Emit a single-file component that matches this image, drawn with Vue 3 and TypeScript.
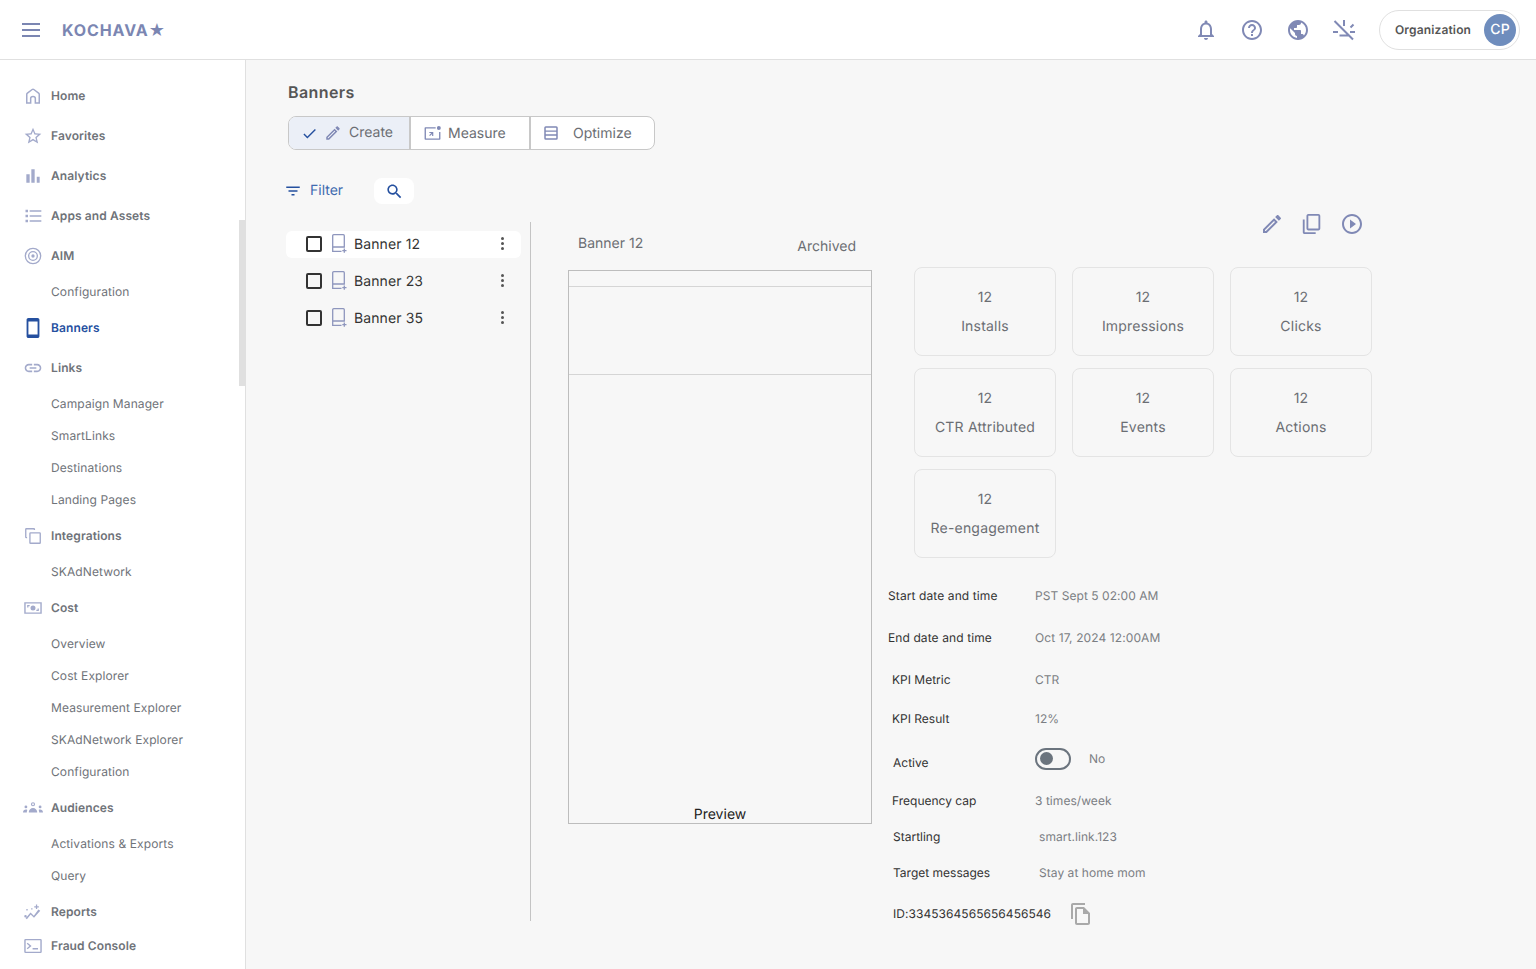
<script setup lang="ts">
interface NavItem { label: string; icon?: string; active?: boolean; last?: boolean }

const icons: Record<string, string> = {
  home: 'M4.500 20.500V10.200C4.500 9.600 4.800 9 5.300 8.600L11 4.200C11.600 3.800 12.400 3.800 13 4.200L18.700 8.600C19.200 9 19.500 9.600 19.500 10.200V20.500H14.800V15C14.800 13.600 13.600 12.600 12 12.600S9.200 13.600 9.200 15V20.500Z',
  star: 'M22 9.240l-7.190-.62L12 2 9.190 8.630 2 9.240l5.460 4.730L5.820 21 12 17.270 18.180 21l-1.630-7.030L22 9.240zM12 15.400l-3.760 2.270 1-4.280-3.320-2.880 4.380-.38L12 6.100l1.710 4.040 4.380.38-3.320 2.880 1 4.280L12 15.400z',
  bars: 'M4 10h4v10H4zM10 4h4v16h-4zM16.500 13H20v7h-3.500z',
  list: 'M3 4.500h3v3H3zM3 10.500h3v3H3zM3 16.500h3v3H3zM8 5h14v2H8zM8 11h14v2H8zM8 17h14v2H8z',
  aim: 'M12 2a10 10 0 1 0 0 20 10 10 0 0 0 0-20zm0 18.400a8.400 8.400 0 1 1 0-16.800 8.400 8.400 0 0 1 0 16.800zM12 6a6 6 0 1 0 0 12 6 6 0 0 0 0-12zm0 10.400a4.400 4.400 0 1 1 0-8.800 4.400 4.400 0 0 1 0 8.800zM12 10a2 2 0 1 0 0 4 2 2 0 0 0 0-4z',
  phone: 'M17 1.010L7 1c-1.100 0-2 .9-2 2v18c0 1.100.9 2 2 2h10c1.100 0 2-.9 2-2V3c0-1.100-.9-1.990-2-1.990zM17 19H7V5h10v14z',
  link: 'M3.900 12c0-1.710 1.390-3.100 3.100-3.100h4V7H7c-2.760 0-5 2.240-5 5s2.240 5 5 5h4v-1.900H7c-1.710 0-3.100-1.390-3.100-3.100zM8 13h8v-2H8v2zm9-6h-4v1.900h4c1.710 0 3.100 1.390 3.100 3.100s-1.390 3.100-3.100 3.100h-4V17h4c2.760 0 5-2.240 5-5s-2.240-5-5-5z',
  integrations: 'M4 2.500h9a1.500 1.500 0 0 1 1.500 1.500v.8h-1.600V4.100H4.100v9h.8v1.600H4A1.500 1.500 0 0 1 2.500 13.200V4A1.500 1.500 0 0 1 4 2.500zM9 7.500h11A1.500 1.500 0 0 1 21.500 9v11a1.500 1.500 0 0 1-1.500 1.500H9A1.500 1.500 0 0 1 7.500 20V9A1.500 1.500 0 0 1 9 7.500zm.1 1.600v10.800h10.800V9.100z',
  cost: 'M1.500 5h21v14h-21zM3.200 6.700v10.600h17.600V6.700zM12 9a3 3 0 1 1 0 6 3 3 0 0 1 0-6zM5 8.500h3V10H6.500v1.500H5zM19 15.500h-3V14h1.500v-1.500H19z',
  audiences: 'M12 5a2.500 2.500 0 1 1 0 5 2.500 2.500 0 0 1 0-5zm0 1.400a1.100 1.100 0 1 0 0 2.200 1.100 1.100 0 0 0 0-2.200zM7 16.500c0-2.200 2.400-4.500 5-4.500s5 2.300 5 4.500v1H7zM3.500 9a1.700 1.700 0 1 1 0 3.400 1.700 1.700 0 0 1 0-3.400zM20.500 9a1.700 1.700 0 1 1 0 3.400 1.700 1.700 0 0 1 0-3.400zM0 17.500c0-2 1.500-3.600 3.500-3.600.7 0 1.200.2 1.700.5-.4.800-.6 1.700-.6 3.100zM24 17.500c0-2-1.500-3.600-3.500-3.600-.7 0-1.200.2-1.700.5.4.800.6 1.700.6 3.100z',
  reports: 'M3.200 19.500 9 12.500l4 4 5.500-7.500 2.200 1.500L13.200 19l-4-4-4.500 5.800zM3 15.500a1.500 1.500 0 1 1 0 3 1.500 1.500 0 0 1 0-3zM4 8.500h1.600v1.600H4zM9.800 7.500h1.600v1.600H9.800zM15.500 3h1.500v2h2v1.500h-2v2h-1.500v-2h-2V5h2z',
  console: 'M3 3.500h18A1.500 1.500 0 0 1 22.500 5v14a1.500 1.500 0 0 1-1.500 1.500H3A1.500 1.500 0 0 1 1.500 19V5A1.500 1.500 0 0 1 3 3.500zm.2 1.700v13.600h17.600V5.200zM5.500 8.200l4.800 3.800-4.800 3.800-1-1.200 3.200-2.600-3.200-2.600zM11.500 14.500h6.500v1.700h-6.500z',
  bell: 'M12 22c1.100 0 2-.9 2-2h-4c0 1.100.9 2 2 2zm6-6v-5c0-3.070-1.630-5.640-4.500-6.320V4c0-.83-.67-1.500-1.500-1.500s-1.500.67-1.500 1.500v.68C7.640 5.360 6 7.920 6 11v5l-2 2v1h16v-1l-2-2zm-2 1H8v-6c0-2.480 1.510-4.500 4-4.500s4 2.020 4 4.500v6z',
  help: 'M11 18h2v-2h-2v2zm1-16C6.480 2 2 6.480 2 12s4.480 10 10 10 10-4.480 10-10S17.520 2 12 2zm0 18c-4.410 0-8-3.590-8-8s3.590-8 8-8 8 3.590 8 8-3.590 8-8 8zm0-14c-2.210 0-4 1.790-4 4h2c0-1.100.9-2 2-2s2 .9 2 2c0 2-3 1.750-3 5h2c0-2.250 3-2.500 3-5 0-2.210-1.790-4-4-4z',
  globe: 'M12 2C6.480 2 2 6.480 2 12s4.480 10 10 10 10-4.480 10-10S17.520 2 12 2zm-1 17.930c-3.950-.49-7-3.850-7-7.930 0-.62.08-1.210.21-1.790L9 15v1c0 1.100.9 2 2 2v1.930zm6.900-2.540c-.26-.81-1-1.390-1.900-1.390h-1v-3c0-.55-.45-1-1-1H8v-2h2c.55 0 1-.45 1-1V7h2c1.100 0 2-.9 2-2v-.41c2.930 1.190 5 4.060 5 7.410 0 2.080-.8 3.970-2.100 5.390z',
  lightOff: 'M2.500 3L21 21.500M12 2V8M18.500 9.500L21.500 6.500M1 14H6M18 14H23M7.500 17.500H17',
  edit: 'M3 17.250V21h3.750L17.810 9.940l-3.750-3.750L3 17.250zM5.920 19H5v-.92l9.060-9.060.92.92L5.920 19zM20.710 5.630l-2.340-2.340c-.2-.2-.45-.29-.71-.29s-.51.1-.7.29l-1.830 1.830 3.750 3.750 1.830-1.830c.39-.39.39-1.020 0-1.410z',
  copy: 'M16 1H4c-1.100 0-2 .9-2 2v14h2V3h12V1zm3 4H8c-1.100 0-2 .9-2 2v14c0 1.100.9 2 2 2h11c1.100 0 2-.9 2-2V7c0-1.100-.9-2-2-2zm0 16H8V7h11v14z',
  play: 'M10 16.500l6-4.500-6-4.500v9zM12 2C6.480 2 2 6.480 2 12s4.480 10 10 10 10-4.480 10-10S17.520 2 12 2zm0 18c-4.410 0-8-3.590-8-8s3.590-8 8-8 8 3.590 8 8-3.590 8-8 8z',
  file: 'M16 1H4c-1.100 0-2 .9-2 2v14h2V3h12V1zm-1 4H8c-1.100 0-1.990.9-1.990 2L6 21c0 1.100.89 2 1.990 2H19c1.100 0 2-.9 2-2V11l-6-6zM8 21V7h6v5h5v9H8z',
  search: 'M15.500 14h-.79l-.28-.27C15.410 12.590 16 11.110 16 9.500 16 5.910 13.090 3 9.500 3S3 5.910 3 9.500 5.910 16 9.500 16c1.610 0 3.090-.59 4.230-1.570l.27.28v.79l5 4.990L20.490 19l-4.990-5zm-6 0C7.010 14 5 11.990 5 9.500S7.010 5 9.500 5 14 7.010 14 9.500 11.990 14 9.500 14z',
  filter: 'M10 18h4v-2h-4v2zM3 6v2h18V6H3zm3 7h12v-2H6v2z',
  check: 'M9 16.170L4.830 12l-1.420 1.410L9 19 21 7l-1.410-1.410z',
  measure: 'M3 4h13v1.700H3.700v12.600h16.600V10H22v9a1 1 0 0 1-1 1H3a1 1 0 0 1-1-1V5a1 1 0 0 1 1-1zM20 2.500a2.500 2.500 0 1 1 0 5 2.500 2.500 0 0 1 0-5zM8 10h5v5h-1.500v-2.500L8.800 15.200l-1-1 2.700-2.700H8z',
  table: 'M5 3h14a2 2 0 0 1 2 2v14a2 2 0 0 1-2 2H5a2 2 0 0 1-2-2V5a2 2 0 0 1 2-2zm0 2v3.500h14V5zm0 5.300v3.400h14v-3.400zm0 5.200V19h14v-3.500z',
}

const nav: NavItem[] = [
  { label: 'Home', icon: 'home' },
  { label: 'Favorites', icon: 'star' },
  { label: 'Analytics', icon: 'bars' },
  { label: 'Apps and Assets', icon: 'list' },
  { label: 'AIM', icon: 'aim' },
  { label: 'Configuration' },
  { label: 'Banners', icon: 'phone', active: true },
  { label: 'Links', icon: 'link' },
  { label: 'Campaign Manager' },
  { label: 'SmartLinks' },
  { label: 'Destinations' },
  { label: 'Landing Pages' },
  { label: 'Integrations', icon: 'integrations' },
  { label: 'SKAdNetwork' },
  { label: 'Cost', icon: 'cost' },
  { label: 'Overview' },
  { label: 'Cost Explorer' },
  { label: 'Measurement Explorer' },
  { label: 'SKAdNetwork Explorer' },
  { label: 'Configuration' },
  { label: 'Audiences', icon: 'audiences' },
  { label: 'Activations & Exports' },
  { label: 'Query' },
  { label: 'Reports', icon: 'reports' },
  { label: 'Fraud Console', icon: 'console', last: true },
]

const banners = ['Banner 12', 'Banner 23', 'Banner 35']
const stats = ['Installs', 'Impressions', 'Clicks', 'CTR Attributed', 'Events', 'Actions', 'Re-engagement']
</script>

<template>
  <div class="app">
    <header class="topbar">
      <div class="menu"><span></span><span></span><span></span></div>
      <div class="logo">KOCHAVA<span class="logo-star">★</span></div>
      <div class="top-icons">
        <svg viewBox="0 0 24 24"><path :d="icons.bell" /></svg>
        <svg viewBox="0 0 24 24"><path :d="icons.help" /></svg>
        <svg viewBox="0 0 24 24"><path :d="icons.globe" /></svg>
        <svg viewBox="0 0 24 24" class="light-off"><path :d="icons.lightOff" /></svg>
      </div>
      <div class="org">
        <span>Organization</span>
        <span class="avatar">CP</span>
      </div>
    </header>

    <div class="body">
      <aside class="sidebar">
        <div class="thumb"></div>
        <nav>
          <div
            v-for="(item, i) in nav"
            :key="i"
            class="nav-row"
            :class="{ parent: item.icon, active: item.active, last: item.last }"
          >
            <svg v-if="item.icon" viewBox="0 0 24 24" class="nav-icon" :class="'i-' + item.icon"><path :d="icons[item.icon]" /></svg>
            <span>{{ item.label }}</span>
          </div>
        </nav>
      </aside>

      <main class="main">
        <h1>Banners</h1>
        <div class="segments">
          <div class="seg seg-on">
            <svg viewBox="0 0 24 24" class="seg-check"><path :d="icons.check" /></svg>
            <svg viewBox="0 0 24 24" class="seg-icon seg-pen"><path :d="icons.edit" /></svg>
            <span>Create</span>
          </div>
          <div class="seg seg-measure">
            <svg viewBox="0 0 24 24" class="seg-icon"><path :d="icons.measure" /></svg>
            <span>Measure</span>
          </div>
          <div class="seg seg-optimize">
            <svg viewBox="0 0 24 24" class="seg-icon"><path :d="icons.table" /></svg>
            <span>Optimize</span>
          </div>
        </div>

        <div class="toolbar">
          <div class="filter">
            <svg viewBox="0 0 24 24"><path :d="icons.filter" /></svg>
            <span>Filter</span>
          </div>
          <div class="search">
            <svg viewBox="0 0 24 24"><path :d="icons.search" /></svg>
          </div>
        </div>

        <div class="workspace">
          <div class="list">
            <div v-for="(b, i) in banners" :key="b" class="list-row" :class="{ selected: i === 0 }">
              <span class="checkbox"></span>
              <svg viewBox="0 0 15 19" class="banner-icon">
                <path d="M1.700.7H11.300A1 1 0 0 1 12.300 1.700V13H.7V1.700A1 1 0 0 1 1.700.7ZM.7 13V17.300H9.500M12.300 14.500V18.700M10.300 16.700H14.500" />
              </svg>
              <span class="list-label">{{ b }}</span>
              <span class="dots"><i></i><i></i><i></i></span>
            </div>
          </div>

          <div class="preview-col">
            <div class="preview-head">
              <span class="ph-name">Banner 12</span>
              <span class="ph-status">Archived</span>
            </div>
            <div class="preview">
              <div class="pv-a"></div>
              <div class="pv-b"></div>
              <div class="pv-c">Preview</div>
            </div>
          </div>

          <div class="info-col">
            <div class="actions">
              <svg viewBox="0 0 24 24"><path :d="icons.edit" /></svg>
              <svg viewBox="0 0 24 24" class="flip"><path :d="icons.copy" /></svg>
              <svg viewBox="0 0 24 24"><path :d="icons.play" /></svg>
            </div>
            <div class="cards">
              <div v-for="s in stats" :key="s" class="card">
                <span>12</span>
                <span>{{ s }}</span>
              </div>
            </div>
            <div class="details">
              <div class="d-row r-start"><span class="k">Start date and time</span><span class="v">PST Sept 5 02:00 AM</span></div>
              <div class="d-row r-end"><span class="k">End date and time</span><span class="v">Oct 17, 2024 12:00AM</span></div>
              <div class="d-row r-metric"><span class="k">KPI Metric</span><span class="v">CTR</span></div>
              <div class="d-row r-result"><span class="k">KPI Result</span><span class="v">12%</span></div>
              <div class="d-row r-active">
                <span class="k">Active</span>
                <span class="toggle"><i></i></span>
                <span class="v no">No</span>
              </div>
              <div class="d-row r-freq"><span class="k">Frequency cap</span><span class="v">3 times/week</span></div>
              <div class="d-row r-start2"><span class="k">Startling</span><span class="v">smart.link.123</span></div>
              <div class="d-row r-target"><span class="k">Target messages</span><span class="v">Stay at home mom</span></div>
              <div class="d-row r-id">
                <span class="k">ID:3345364565656456546</span>
                <svg viewBox="0 0 24 24"><path :d="icons.file" /></svg>
              </div>
            </div>
          </div>
        </div>
      </main>
    </div>
  </div>
</template>

<style>
html, body { margin: 0; padding: 0; background: #f7f7f7; overflow: hidden; }
</style>

<style scoped>
.app {
  width: 1536px;
  height: 969px;
  overflow: hidden;
  display: flex;
  flex-direction: column;
  font-family: Inter, "Liberation Sans", sans-serif;
  text-rendering: geometricPrecision;
  color: #333;
}
svg { display: block; fill: #8089b5; }

/* top bar */
.topbar {
  height: 60px;
  box-sizing: border-box;
  background: #fff;
  border-bottom: 1px solid #e0e0e0;
  display: flex;
  align-items: center;
  padding: 0 16px 0 22px;
  flex: none;
}
.menu { width: 18px; display: flex; flex-direction: column; gap: 4px; }
.menu span { height: 2px; background: #7b86b2; display: block; }
.logo {
  margin-left: 22px;
  font-size: 16px;
  font-weight: 700;
  color: #7b86b2;
  letter-spacing: 0.9px;
  display: flex;
  align-items: center;
}
.logo-star { font-size: 16px; margin-left: 0; }
.top-icons { margin-left: auto; display: flex; gap: 22px; align-items: center; }
.top-icons svg { width: 24px; height: 24px; }
.top-icons .light-off path { fill: none; stroke: #8089b5; stroke-width: 2; }
.org {
  margin-left: 23px;
  width: 141px;
  height: 40px;
  box-sizing: border-box;
  border: 1px solid #e0e0e0;
  border-radius: 20px;
  display: flex;
  align-items: center;
  justify-content: space-between;
  padding: 0 3px 0 15px;
  font-size: 12px;
  font-weight: 600;
  letter-spacing: 0.15px;
  color: #555;
}
.avatar {
  width: 32px;
  height: 32px;
  border-radius: 50%;
  background: #6f8dbd;
  color: #fff;
  font-size: 14px;
  font-weight: 500;
  display: flex;
  align-items: center;
  justify-content: center;
}

/* body */
.body { flex: 1; display: flex; min-height: 0; }
.sidebar {
  width: 246px;
  flex: none;
  box-sizing: border-box;
  background: #fff;
  border-right: 1px solid #e0e0e0;
  padding-top: 16px;
  position: relative;
  overflow: hidden;
}
.thumb {
  position: absolute;
  right: 0;
  top: 160px;
  width: 6px;
  height: 166px;
  background: #e0e0e0;
}
.nav-row {
  height: 32px;
  display: flex;
  align-items: center;
  padding-left: 51px;
  position: relative;
  font-size: 12px;
  color: #6f7379;
  letter-spacing: 0.1px;
}
.nav-row span { margin-bottom: 2px; }
.nav-row.parent { height: 40px; font-weight: 600; color: #6f7379; }
.nav-row.last { height: 28px; }
.nav-row.active { color: #25509f; }
.nav-icon {
  position: absolute;
  left: 23px;
  top: 50%;
  width: 20px;
  height: 20px;
  margin-top: -10px;
  fill: #a3aacb;
}
.nav-row.active .nav-icon { fill: #25509f; }
.i-phone { width: 22px; height: 22px; margin-top: -11px; left: 22px; }
.i-home path { fill: none; stroke: #a3aacb; stroke-width: 1.8; }

/* main */
.main {
  flex: 1;
  min-width: 0;
  padding: 23px 0 0 42px;
  background: #f7f7f7;
}
h1 {
  margin: 0;
  font-size: 16px;
  line-height: 19px;
  font-weight: 600;
  color: #555;
  letter-spacing: 0.4px;
}
.segments {
  margin-top: 14px;
  width: 367px;
  height: 34px;
  box-sizing: border-box;
  border: 1px solid #c8c8c8;
  border-radius: 8px;
  background: #fff;
  display: flex;
  overflow: hidden;
  font-size: 14px;
  color: #6b6e73;
}
.seg {
  display: flex;
  align-items: center;
  box-sizing: border-box;
  border-right: 2px solid #c8c8c8;
  height: 100%;
}
.seg:last-child { border-right: 0; flex: 1; }
.seg-on { width: 122px; background: #ebeff7; padding-left: 12px; }
.seg-on span { margin-top: -1px; }
.seg-measure { width: 120px; padding-left: 12px; }
.seg-optimize { padding-left: 11px; }
.seg-check { width: 17px; height: 17px; fill: #25509f; }
.seg-pen { margin-left: 6px; margin-right: 7px; }
.seg-on .seg-pen { width: 18px; height: 18px; }
.seg-icon { width: 16px; height: 16px; }
.seg-measure .seg-icon { width: 19px; height: 19px; margin-right: 6px; }
.seg-optimize .seg-icon { width: 18px; height: 18px; margin-right: 13px; }

.toolbar { display: flex; align-items: center; margin-top: 28px; margin-left: -4px; height: 26px; }
.filter { display: flex; align-items: center; color: #3f6bb0; font-size: 14px; width: 90px; }
.filter span { margin-top: -1px; }
.filter svg { width: 18px; height: 18px; fill: #25509f; margin-right: 8px; }
.search {
  width: 40px;
  height: 26px;
  border-radius: 8px;
  background: #fff;
  display: flex;
  align-items: center;
  justify-content: center;
}
.search svg { width: 19px; height: 19px; fill: #25509f; margin-left: 1px; }

/* workspace */
.workspace { display: flex; margin-top: 18px; margin-left: -2px; height: 699px; }
.list {
  width: 245px;
  box-sizing: border-box;
  border-right: 1px solid #c4c4c4;
  padding-top: 9px;
  flex: none;
}
.list-row {
  width: 235px;
  height: 27px;
  margin-bottom: 10px;
  display: flex;
  align-items: center;
  box-sizing: border-box;
  padding-left: 20px;
  border-radius: 6px;
  font-size: 14px;
  color: #333;
  letter-spacing: 0.1px;
}
.list-row.selected { background: #fff; }
.checkbox {
  width: 12px;
  height: 12px;
  border: 2px solid #333;
  border-radius: 2px;
  flex: none;
  margin-bottom: 2px;
}
.banner-icon { width: 15px; height: 19px; margin-left: 10px; margin-bottom: 2px; }
.banner-icon path { fill: none; stroke: #8e96bd; stroke-width: 1.3; }
.list-label { margin-left: 7px; margin-top: -1px; }
.dots { margin-left: auto; margin-right: 17px; display: flex; flex-direction: column; gap: 1.5px; margin-bottom: 2px; }
.dots i { width: 3.500px; height: 3.500px; border-radius: 50%; background: #555; display: block; }

.preview-col { width: 304px; margin-left: 37px; flex: none; }
.preview-head {
  height: 48px;
  display: flex;
  justify-content: space-between;
  padding: 0 16px 0 10px;
  font-size: 14px;
  color: #6b6e73;
}
.ph-name { margin-top: 13px; line-height: 17px; }
.ph-status { margin-top: 16px; line-height: 17px; }
.preview {
  height: 554px;
  box-sizing: border-box;
  border: 1px solid #bdbdbd;
  display: flex;
  flex-direction: column;
}
.pv-a { height: 15px; border-bottom: 1px solid #d5d5d5; }
.pv-b { height: 87px; border-bottom: 1px solid #d5d5d5; }
.pv-c {
  flex: 1;
  display: flex;
  align-items: flex-end;
  justify-content: center;
  font-size: 14px;
  line-height: 17px;
  color: #222;
}

.info-col { margin-left: 16px; width: 484px; flex: none; }
.actions {
  display: flex;
  justify-content: flex-end;
  gap: 16px;
  height: 45px;
  padding: 0 8px 0 0;
  box-sizing: border-box;
}
.actions svg { width: 24px; height: 24px; margin-top: -10px; }
.actions .flip { transform: scale(0.92, -0.92); }
.cards {
  margin-left: 26px;
  display: grid;
  grid-template-columns: repeat(3, 142px);
  grid-auto-rows: 89px;
  gap: 12px 16px;
}
.card {
  box-sizing: border-box;
  border: 1px solid #e4e4e4;
  border-radius: 8px;
  display: flex;
  flex-direction: column;
  align-items: center;
  gap: 12px;
  padding-top: 21px;
  font-size: 14px;
  line-height: 17px;
  color: #6b6e73;
  letter-spacing: 0.2px;
}
.details { font-size: 12px; line-height: 15px; padding-top: 30px; }
.d-row { display: flex; align-items: center; height: 15px; }
.k { color: #333; width: 147px; flex: none; }
.v { color: #7b7e83; letter-spacing: 0.05px; }
.r-start .k, .r-end .k, .r-end .v { letter-spacing: 0.1px; }
.r-end, .r-metric { margin-top: 27px; }
.r-metric { padding-left: 4px; }
.r-metric .k, .r-result .k, .r-freq .k { width: 143px; }
.r-result { margin-top: 24px; padding-left: 4px; }
.r-active { margin-top: 29px; padding-left: 5px; }
.r-active .k { width: 142px; }
.toggle {
  width: 36px;
  height: 22px;
  box-sizing: border-box;
  border: 2px solid #6b747e;
  border-radius: 11px;
  display: flex;
  align-items: center;
  padding-left: 3px;
  margin-top: -8px;
}
.toggle i { width: 13px; height: 13px; border-radius: 50%; background: #6b747e; display: block; }
.no { margin-left: 18px; margin-top: -8px; }
.r-freq { margin-top: 23px; padding-left: 4px; }
.r-start2 { margin-top: 21px; padding-left: 5px; }
.r-start2 .k, .r-target .k { width: 146px; }
.r-target { margin-top: 21px; padding-left: 5px; }
.r-id { margin-top: 26px; padding-left: 5px; }
.r-id .k { width: 178px; letter-spacing: 0.05px; }
.r-id svg { width: 24px; height: 24px; fill: #a9a9a9; margin-left: -2px; }
</style>
